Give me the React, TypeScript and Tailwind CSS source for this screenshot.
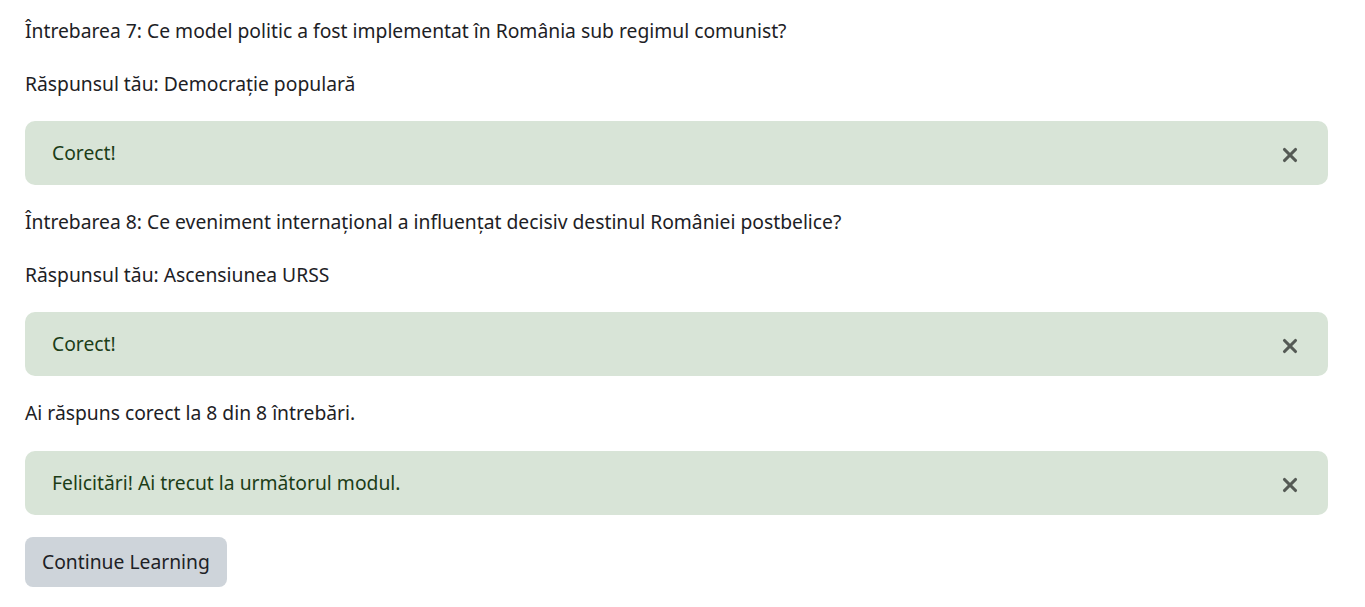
import { X } from 'lucide-react'

function Alert({ text }: { text: string }) {
  return (
    <div className="mb-[22px] flex h-16 items-center justify-between rounded-[10px] bg-[#d8e4d7] pl-[27px] pr-[27px] text-[#1c3d17]">
      <span>{text}</span>
      <X size={22} strokeWidth={3.4} className="mt-1 text-[#555a55]" />
    </div>
  )
}

export default function App() {
  return (
    <div className="bg-white pl-[25px] pr-[37px] pt-4 pb-5 font-['Noto_Sans',sans-serif] text-[19.3px] leading-[30px] text-[#1d2125]">
      <p className="mb-[23px]">Întrebarea 7: Ce model politic a fost implementat în România sub regimul comunist?</p>
      <p className="mb-[22px]">Răspunsul tău: Democrație populară</p>
      <Alert text="Corect!" />
      <p className="mb-[23px]">Întrebarea 8: Ce eveniment internațional a influențat decisiv destinul României postbelice?</p>
      <p className="mb-[22px]">Răspunsul tău: Ascensiunea URSS</p>
      <Alert text="Corect!" />
      <p className="mb-[23px]">Ai răspuns corect la 8 din 8 întrebări.</p>
      <Alert text="Felicitări! Ai trecut la următorul modul." />
      <button className="h-[50px] rounded-[8px] bg-[#ced4da] px-[17px] text-[#1d2125]">Continue Learning</button>
    </div>
  )
}
